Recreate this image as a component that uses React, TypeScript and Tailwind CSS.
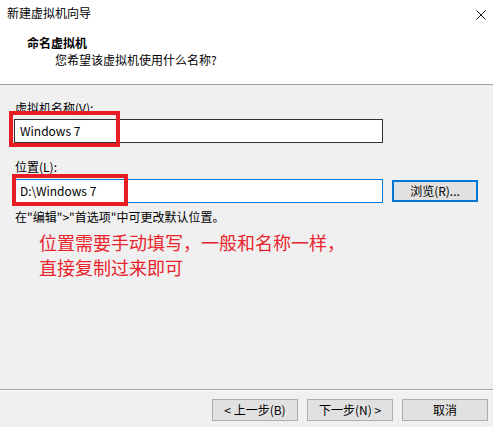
import React from "react";

const font = "font-['Microsoft_YaHei','Noto_Sans_CJK_SC',sans-serif]";

const Btn = ({ label }: { label: string }) => (
  <button className="w-[86px] h-[22px] bg-[#e1e1e1] border border-[#adadad] text-[12px] leading-none text-black flex items-center justify-center">
    {label}
  </button>
);

const App = () => {
  return (
    <main
      className={`w-[493px] h-[427px] bg-[#f0f0f0] flex flex-col text-[12px] text-black ${font}`}
    >
      {/* header */}
      <header className="h-[85px] bg-white border-b border-[#a0a0a0] flex flex-col pt-[5px]">
        <div className="flex items-center justify-between pl-[7px] pr-[7px] h-[16px] leading-[16px]">
          <span>新建虚拟机向导</span>
          <svg width="10" height="10" viewBox="0 0 10 10" className="mt-[3px]">
            <path d="M0.5 0.5 L9.5 9.5 M9.5 0.5 L0.5 9.5" stroke="#111" strokeWidth="1" />
          </svg>
        </div>
        <h1 className="mt-[14px] pl-[27px] font-bold leading-[16px] text-[12px]">命名虚拟机</h1>
        <p className="mt-[1px] pl-[55px] leading-[16px]">您希望该虚拟机使用什么名称?</p>
      </header>

      {/* body */}
      <section className="flex flex-col px-[14px]">
        <label className="mt-[15px] pl-[1px] leading-[16px]">虚拟机名称(V):</label>
        <div className="mt-[3px] relative w-[369px]">
          <div className="h-[24px] bg-white border border-[#333333] pl-[5px] flex items-center">
            Windows 7
          </div>
          <div className="absolute left-[-5px] top-[-8px] w-[111px] h-[36px] border-4 border-[#e81c24]" />
        </div>

        <label className="mt-[16px] pl-[1px] leading-[16px]">位置(L):</label>
        <div className="mt-[4px] flex items-start">
          <div className="relative w-[369px]">
            <div className="h-[24px] bg-white border border-[#0078d7] pl-[5px] flex items-center">
              D:\Windows 7
            </div>
            <div className="absolute left-[-2px] top-[-5px] w-[116px] h-[32px] border-4 border-[#e81c24]" />
          </div>
          <button className="ml-[9px] mt-[1px] w-[86px] h-[22px] bg-[#e1e1e1] border-2 border-[#0078d7] flex items-center justify-center leading-none">
            浏览(R)...
          </button>
        </div>

        <p className="mt-[6px] pl-[1px] leading-[16px]">在"编辑"&gt;"首选项"中可更改默认位置。</p>

        <p className="mt-[5px] pl-[25px] text-[18px] leading-[25px] text-[#e8242c]">
          位置需要手动填写，一般和名称一样，
          <br />
          直接复制过来即可
        </p>
      </section>

      {/* footer */}
      <footer className="mt-auto h-[38px] border-t border-[#a0a0a0]">
        <div className="h-full border-t border-white flex items-start justify-end gap-[9px] pr-[5px] pt-[8px]">
          <Btn label="< 上一步(B)" />
          <Btn label="下一步(N) >" />
          <Btn label="取消" />
        </div>
      </footer>
    </main>
  );
};

export default App;
